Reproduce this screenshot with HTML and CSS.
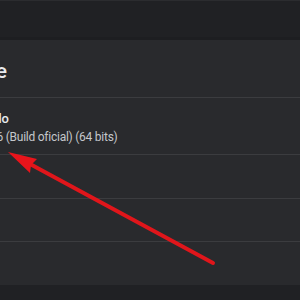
FILE: index.html
```html
<!DOCTYPE html>
<html>
<head>
<meta charset="utf-8">
<link rel="stylesheet" href="styles.css">
</head>
<body>
<div class="page">
  <div class="topbar"></div>
  <div class="card">
    <div class="header">
      <div class="cut title-cut"><span class="title">Google Chrome</span></div>
    </div>
    <div class="status">
      <div class="line"><div class="cut status-cut"><span class="status-text">Chrome está actualizado</span></div></div>
      <div class="line version"><div class="cut ver-cut"><span>Versión 83.0.4103.116</span></div><span class="rest">&nbsp;(Build oficial) (64 bits)</span></div>
    </div>
    <div class="row"></div>
    <div class="row"></div>
    <div class="row last"></div>
  </div>
  <div class="bottom"></div>
  <svg class="arrow" width="300" height="300" viewBox="0 0 300 300">
    <line x1="213" y1="263" x2="30" y2="164" stroke="#e0161b" stroke-width="4" stroke-linecap="round"/>
    <polygon points="8,152 37,159 31,165 30,173" fill="#e8141b"/>
  </svg>
</div>
</body>
</html>
```
FILE: styles.css
```css
html, body {
  margin: 0;
  padding: 0;
  background: #202124;
}
.page {
  position: relative;
  width: 300px;
  height: 300px;
  overflow: hidden;
  display: flex;
  flex-direction: column;
  font-family: Roboto, "Noto Sans", sans-serif;
}
.topbar {
  height: 40px;
  background: #202124;
  border-top: 1px solid #2b2c2f;
  border-bottom: 3px solid #1d1e21;
  box-sizing: border-box;
  flex: none;
}
.card {
  height: 245px;
  background: #292a2d;
  display: flex;
  flex-direction: column;
  flex: none;
}
.header {
  height: 58px;
  display: flex;
  align-items: center;
  border-bottom: 1px solid #3b3c3f;
  padding-top: 5px;
  box-sizing: border-box;
  flex: none;
}
.cut {
  display: flex;
  justify-content: flex-end;
  white-space: nowrap;
  flex: none;
}
.title-cut { width: 7px; }
.title {
  font-size: 21px;
  font-weight: 500;
  color: #e8eaed;
}
.status {
  height: 57px;
  border-bottom: 1px solid #3b3c3f;
  box-sizing: border-box;
  display: flex;
  flex-direction: column;
  justify-content: center;
  gap: 1px;
  padding-top: 3px;
  flex: none;
}
.line {
  display: flex;
  white-space: nowrap;
  height: 17px;
  align-items: center;
}
.status-cut { width: 9px; }
.status-text {
  font-size: 13px;
  font-weight: 500;
  color: #e8eaed;
}
.version {
  font-size: 12px;
  letter-spacing: -0.25px;
  color: #c4c7cb;
}
.ver-cut { width: 3px; }
.row {
  height: 44px;
  border-bottom: 1px solid #3b3c3f;
  box-sizing: border-box;
  flex: none;
}
.row + .row {
  height: 43px;
}
.row.last {
  border-bottom: none;
  flex: 1;
}
.bottom {
  flex: 1;
  background: #202124;
}
.arrow {
  position: absolute;
  left: 0;
  top: 0;
}
```
